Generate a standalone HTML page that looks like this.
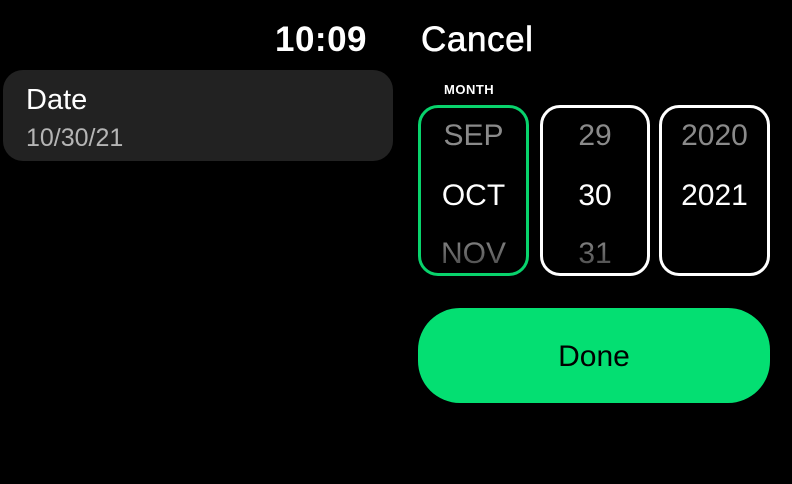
<!DOCTYPE html>
<html><head><meta charset="utf-8"><style>
html,body{margin:0;padding:0;background:#000;width:792px;height:484px;overflow:hidden;font-family:"Liberation Sans",sans-serif;color:#fff}
.a{position:absolute}
.time{left:275px;top:20px;font-size:35px;font-weight:bold;letter-spacing:0.5px}
.cancel{left:421px;top:20px;font-size:35px;letter-spacing:0.6px;-webkit-text-stroke:0.6px #fff}
.card{left:3px;top:70px;width:390px;height:91px;background:#222;border-radius:20px}
.card .t{position:absolute;left:23px;top:14px;font-size:29px}
.card .s{position:absolute;left:23px;top:54px;font-size:25px;color:#b5b5b5}
.month{left:444px;top:82px;font-size:13px;font-weight:bold;letter-spacing:0.5px}
.box{top:105px;height:165px;border:3px solid #fff;border-radius:20px;box-sizing:content-box}
.box div{position:absolute;left:0;right:0;text-align:center;font-size:30px}
.p{top:11px;color:#8a8a8a}
.c{top:71px;color:#fff}
.n{top:129px;background:linear-gradient(#888,#444);-webkit-background-clip:text;background-clip:text;color:transparent}
.done{left:418px;top:308px;width:352px;height:95px;background:#04df72;border-radius:42px;color:#000;font-size:30px;text-align:center;line-height:98px}
</style></head><body>
<div class="a time">10:09</div>
<div class="a cancel">Cancel</div>
<div class="a card"><div class="t">Date</div><div class="s">10/30/21</div></div>
<div class="a month">MONTH</div>
<div class="a box" style="left:418px;width:105px;border-color:#08d36c"><div class="p">SEP</div><div class="c">OCT</div><div class="n">NOV</div></div>
<div class="a box" style="left:540px;width:104px"><div class="p">29</div><div class="c">30</div><div class="n">31</div></div>
<div class="a box" style="left:659px;width:105px"><div class="p">2020</div><div class="c">2021</div></div>
<div class="a done">Done</div>
</body></html>
